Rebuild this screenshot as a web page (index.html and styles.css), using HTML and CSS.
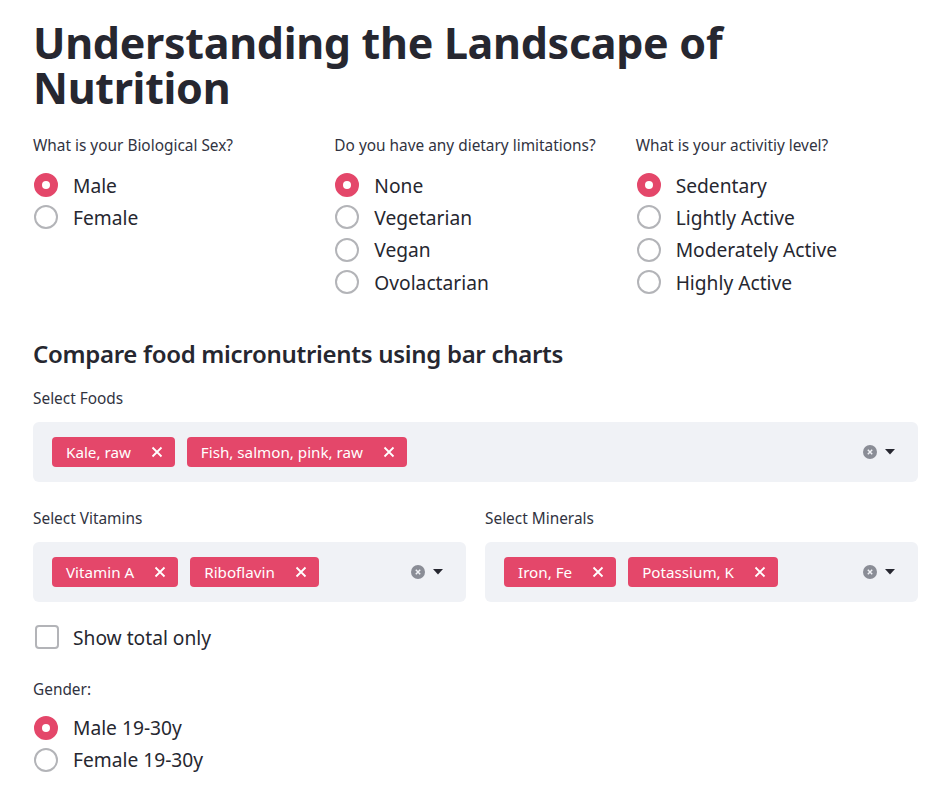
FILE: index.html
```html
<!DOCTYPE html>
<html>
<head>
<meta charset="utf-8">
<link rel="stylesheet" href="styles.css">
</head>
<body>
<main class="page">
  <h1 class="title">Understanding the Landscape of Nutrition</h1>

  <div class="cols3">
    <div class="field">
      <div class="label">What is your Biological Sex?</div>
      <div class="radios">
        <div class="radio checked"><span class="dot"></span><span class="rtext">Male</span></div>
        <div class="radio"><span class="dot"></span><span class="rtext">Female</span></div>
      </div>
    </div>
    <div class="field">
      <div class="label">Do you have any dietary limitations?</div>
      <div class="radios">
        <div class="radio checked"><span class="dot"></span><span class="rtext">None</span></div>
        <div class="radio"><span class="dot"></span><span class="rtext">Vegetarian</span></div>
        <div class="radio"><span class="dot"></span><span class="rtext">Vegan</span></div>
        <div class="radio"><span class="dot"></span><span class="rtext">Ovolactarian</span></div>
      </div>
    </div>
    <div class="field">
      <div class="label">What is your activitiy level?</div>
      <div class="radios">
        <div class="radio checked"><span class="dot"></span><span class="rtext">Sedentary</span></div>
        <div class="radio"><span class="dot"></span><span class="rtext">Lightly Active</span></div>
        <div class="radio"><span class="dot"></span><span class="rtext">Moderately Active</span></div>
        <div class="radio"><span class="dot"></span><span class="rtext">Highly Active</span></div>
      </div>
    </div>
  </div>

  <h2 class="subtitle">Compare food micronutrients using bar charts</h2>

  <div class="field foods">
    <div class="label">Select Foods</div>
    <div class="select">
      <div class="tags">
        <span class="tag">Kale, raw<svg class="x" viewBox="0 0 12 12"><path d="M1.5 1.5L10.5 10.5M10.5 1.5L1.5 10.5"/></svg></span>
        <span class="tag">Fish, salmon, pink, raw<svg class="x" viewBox="0 0 12 12"><path d="M1.5 1.5L10.5 10.5M10.5 1.5L1.5 10.5"/></svg></span>
      </div>
      <div class="controls">
        <svg class="clear" viewBox="0 0 14 14"><circle cx="7" cy="7" r="7"/><path d="M4.8 4.8L9.2 9.2M9.2 4.8L4.8 9.2"/></svg>
        <svg class="caret" viewBox="0 0 10 6"><path d="M0 0H10L5 5.5Z"/></svg>
      </div>
    </div>
  </div>

  <div class="cols2">
    <div class="field">
      <div class="label">Select Vitamins</div>
      <div class="select">
        <div class="tags">
          <span class="tag">Vitamin A<svg class="x" viewBox="0 0 12 12"><path d="M1.5 1.5L10.5 10.5M10.5 1.5L1.5 10.5"/></svg></span>
          <span class="tag">Riboflavin<svg class="x" viewBox="0 0 12 12"><path d="M1.5 1.5L10.5 10.5M10.5 1.5L1.5 10.5"/></svg></span>
        </div>
        <div class="controls">
          <svg class="clear" viewBox="0 0 14 14"><circle cx="7" cy="7" r="7"/><path d="M4.8 4.8L9.2 9.2M9.2 4.8L4.8 9.2"/></svg>
          <svg class="caret" viewBox="0 0 10 6"><path d="M0 0H10L5 5.5Z"/></svg>
        </div>
      </div>
    </div>
    <div class="field">
      <div class="label">Select Minerals</div>
      <div class="select">
        <div class="tags">
          <span class="tag">Iron, Fe<svg class="x" viewBox="0 0 12 12"><path d="M1.5 1.5L10.5 10.5M10.5 1.5L1.5 10.5"/></svg></span>
          <span class="tag">Potassium, K<svg class="x" viewBox="0 0 12 12"><path d="M1.5 1.5L10.5 10.5M10.5 1.5L1.5 10.5"/></svg></span>
        </div>
        <div class="controls">
          <svg class="clear" viewBox="0 0 14 14"><circle cx="7" cy="7" r="7"/><path d="M4.8 4.8L9.2 9.2M9.2 4.8L4.8 9.2"/></svg>
          <svg class="caret" viewBox="0 0 10 6"><path d="M0 0H10L5 5.5Z"/></svg>
        </div>
      </div>
    </div>
  </div>

  <div class="checkrow"><span class="box"></span><span class="rtext">Show total only</span></div>

  <div class="field gender">
    <div class="label">Gender:</div>
    <div class="radios">
      <div class="radio checked"><span class="dot"></span><span class="rtext">Male 19-30y</span></div>
      <div class="radio"><span class="dot"></span><span class="rtext">Female 19-30y</span></div>
    </div>
  </div>
</main>
</body>
</html>
```
FILE: styles.css
```css
* { box-sizing: border-box; }
html, body { margin: 0; padding: 0; background: #ffffff; }
body {
  font-family: "Noto Sans", "Open Sans", sans-serif;
  color: #31333f;
}
.page {
  width: 885px;
  margin-left: 33px;
  padding-top: 20px;
  display: flex;
  flex-direction: column;
}
.title {
  margin: 0;
  font-size: 43px;
  line-height: 45px;
  font-weight: 700;
  color: #262730;
  letter-spacing: -0.3px;
}
.cols3 {
  margin-top: 26px;
  display: grid;
  grid-template-columns: repeat(3, 1fr);
  column-gap: 19px;
}
.cols2 {
  margin-top: 27px;
  display: grid;
  grid-template-columns: 1fr 1fr;
  column-gap: 19px;
}
.field { display: flex; flex-direction: column; }
.label {
  font-size: 15.4px;
  line-height: 20px;
  color: #31333f;
}
.radios {
  margin-top: 13px;
  display: flex;
  flex-direction: column;
}
.radio, .checkrow {
  height: 32.3px;
  display: flex;
  align-items: center;
}
.dot {
  width: 24px;
  height: 24px;
  border-radius: 50%;
  border: 2px solid #b3b4b8;
  margin-left: 1px;
  margin-right: 15px;
  display: flex;
  align-items: center;
  justify-content: center;
  flex: none;
}
.radio.checked .dot {
  background: #e4476a;
  border-color: #e4476a;
}
.radio.checked .dot::after {
  content: "";
  width: 8px;
  height: 8px;
  border-radius: 50%;
  background: #ffffff;
}
.rtext {
  font-size: 19.2px;
  color: #262730;
}
.subtitle {
  margin: 40px 0 0 0;
  font-size: 24px;
  line-height: 32px;
  font-weight: 600;
  color: #262730;
  letter-spacing: -0.3px;
}
.foods { margin-top: 19px; }
.select {
  margin-top: 13px;
  height: 60px;
  background: #f0f2f6;
  border-radius: 6px;
  display: flex;
  align-items: center;
  padding: 0 23px 0 19px;
}
.tags {
  flex: 1;
  display: flex;
  gap: 12px;
}
.tag {
  height: 30px;
  background: #e4476a;
  color: #ffffff;
  border-radius: 4px;
  font-size: 15.2px;
  display: flex;
  align-items: center;
  padding: 0 12px 0 14px;
}
.x {
  width: 12px;
  height: 12px;
  margin-left: 20px;
  fill: none;
  stroke: #ffffff;
  stroke-width: 1.8;
}
.controls {
  display: flex;
  align-items: center;
  gap: 8px;
}
.clear { width: 14px; height: 14px; }
.clear circle { fill: #8a8d96; }
.clear path { stroke: #f0f2f6; stroke-width: 1.5; fill: none; }
.caret { width: 10px; height: 6px; fill: #262730; }
.checkrow { margin-top: 19px; }
.box {
  width: 24px;
  height: 24px;
  border: 2px solid #b3b4b8;
  border-radius: 4px;
  margin-left: 2px;
  margin-right: 14px;
  flex: none;
}
.gender { margin-top: 27px; }
.gender .radios { margin-top: 11px; }
```
